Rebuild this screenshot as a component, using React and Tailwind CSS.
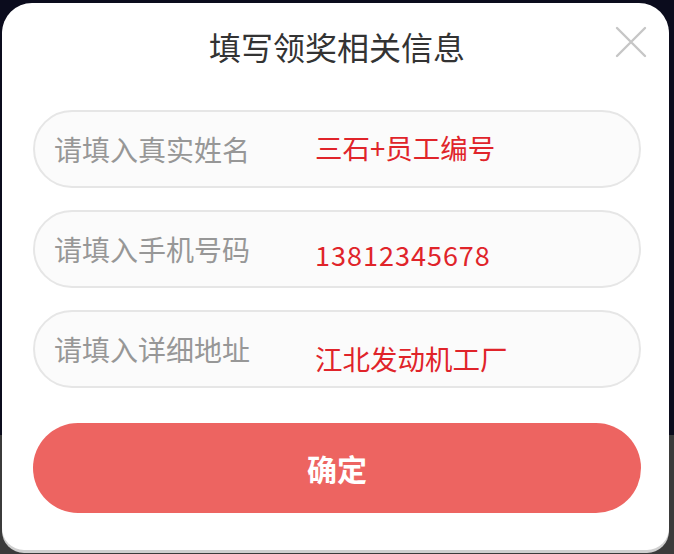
import React from "react";

const fields = [
  { placeholder: "请填入真实姓名", note: "三石+员工编号", offset: "top-[22px]" },
  { placeholder: "请填入手机号码", note: "13812345678", offset: "top-[29px]", digits: true },
  { placeholder: "请填入详细地址", note: "江北发动机工厂", offset: "top-[33px]" },
];

function CloseIcon() {
  return (
    <svg width="32" height="32" viewBox="0 0 32 32" fill="none">
      <path d="M2 2 L30 30 M30 2 L2 30" stroke="#c6c6c6" strokeWidth="2.4" strokeLinecap="round" />
    </svg>
  );
}

export default function App() {
  return (
    <div
      className="relative w-[674px] h-[554px] overflow-hidden flex flex-col"
      style={{ fontFamily: '"Noto Sans CJK SC", "Noto Sans", sans-serif' }}
    >
      <div className="h-[435px] bg-[#0b0c1d]"></div>
      <div className="flex-1 bg-[#3b3b3b]"></div>

      {/* modal */}
      <div className="absolute left-[2px] top-[3px] w-[667px] h-[547px] bg-white rounded-t-[30px] rounded-b-[22px] shadow-[0_3px_0_#cfcfcf]">
        <div className="relative h-[86px] flex items-center justify-center">
          <h2 className="text-[32px] leading-none text-[#333333] pl-[3px]">填写领奖相关信息</h2>
          <button className="absolute left-[613px] top-[23px]">
            <CloseIcon />
          </button>
        </div>

        <div className="ml-[31px] w-[608px] mt-[21px] flex flex-col gap-[22px]">
          {fields.map((f) => (
            <div
              key={f.placeholder}
              className="relative h-[78px] rounded-full border-2 border-[#e6e6e6] bg-[#fbfbfb] flex items-center pl-[19px]"
            >
              <span className="text-[28px] leading-none text-[#979797]">{f.placeholder}</span>
              <span
                className={`absolute left-[280px] ${f.offset} leading-none text-[#e0242a] ${
                  f.digits ? "text-[27px] tracking-[1px]" : "text-[27.5px]"
                }`}
              >
                {f.note}
              </span>
            </div>
          ))}
        </div>

        <button className="ml-[31px] mt-[35px] w-[608px] h-[90px] rounded-full bg-[#ed6461] text-white text-[30px] font-bold leading-none flex items-center justify-center">
          确定
        </button>
      </div>
    </div>
  );
}
